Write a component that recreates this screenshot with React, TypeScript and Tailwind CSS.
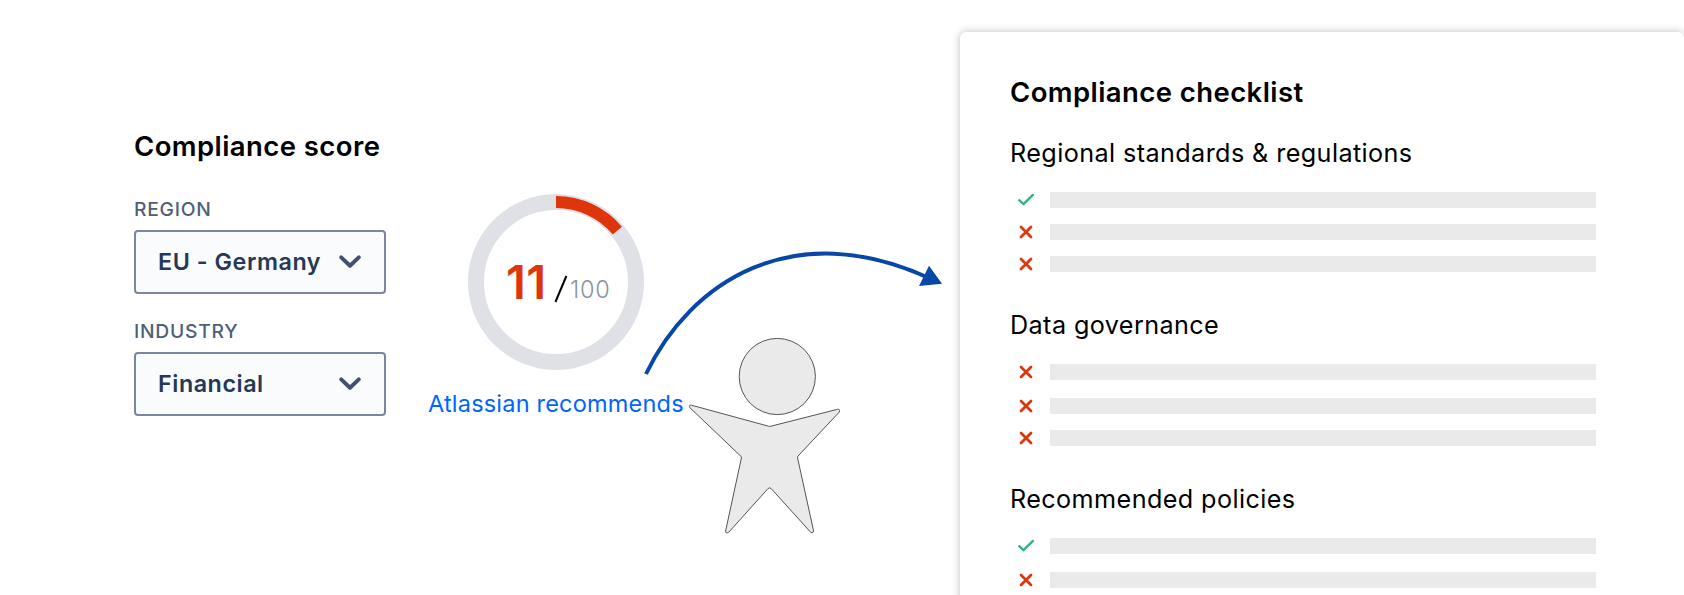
type Item = { ok: boolean; gap: string };
type Section = { title: string; spacing: string; items: Item[] };

const sections: Section[] = [
  {
    title: "Regional standards & regulations",
    spacing: "mt-[26px]",
    items: [
      { ok: true, gap: "mt-5" },
      { ok: false, gap: "mt-4" },
      { ok: false, gap: "mt-4" },
    ],
  },
  {
    title: "Data governance",
    spacing: "mt-[34px]",
    items: [
      { ok: false, gap: "mt-5" },
      { ok: false, gap: "mt-[18px]" },
      { ok: false, gap: "mt-4" },
    ],
  },
  {
    title: "Recommended policies",
    spacing: "mt-[34px]",
    items: [
      { ok: true, gap: "mt-5" },
      { ok: false, gap: "mt-[18px]" },
    ],
  },
];

function Status({ ok }: { ok: boolean }) {
  return (
    <svg
      className="h-4 w-8 shrink-0"
      viewBox="0 0 32 16"
      fill="none"
      strokeLinecap="round"
      strokeLinejoin="round"
    >
      {ok ? (
        <path d="M9.2 8.2L13.5 12.2L22.9 2.9" stroke="#36b37e" strokeWidth="2.4" />
      ) : (
        <path d="M11 3L21 13M21 3L11 13" stroke="#de350b" strokeWidth="2.8" />
      )}
    </svg>
  );
}

function Select({ label, value }: { label: string; value: string }) {
  return (
    <div>
      <div className="text-[19.3px] leading-6 font-medium tracking-[0.75px] text-[#505f79]">{label}</div>
      <button className="mt-[9px] flex h-16 w-[252px] items-center justify-between rounded-[4px] border-2 border-[#7a869a] bg-[#fafbfc] px-[22px]">
        <span className="text-[23.3px] leading-8 font-semibold tracking-[0.55px] whitespace-nowrap text-[#253858]">
          {value}
        </span>
        <svg
          className="h-4 w-6 shrink-0"
          viewBox="0 0 24 16"
          fill="none"
          stroke="#42526e"
          strokeWidth="4"
          strokeLinecap="round"
          strokeLinejoin="round"
        >
          <path d="M3.2 3.4L12 11.8L20.8 3.4" />
        </svg>
      </button>
    </div>
  );
}

export default function App() {
  return (
    <main className="relative flex h-[595px] w-[1684px] overflow-hidden bg-white font-['Inter',sans-serif] text-black">
      <section className="flex w-[960px] shrink-0">
        <div className="ml-[134px] w-[252px] pt-[130px]">
          <h2 className="text-[27.5px] leading-8 font-semibold tracking-[0.42px] whitespace-nowrap">Compliance score</h2>
          <div className="mt-[35px] flex flex-col gap-[25px]">
            <Select label="REGION" value="EU - Germany" />
            <Select label="INDUSTRY" value="Financial" />
          </div>
        </div>
        <div className="ml-[42px] flex w-[256px] flex-col items-center pt-[194px]">
          <div className="relative h-[176px] w-[176px]">
            <svg className="h-full w-full" viewBox="0 0 176 176" fill="none">
              <circle cx="88" cy="88" r="80" stroke="#dfe1e6" strokeWidth="16" />
              <path d="M88 8A80 80 0 0 1 149.3 36.6" stroke="#de350b" strokeWidth="12" />
            </svg>
            <div className="absolute inset-0 flex pt-[60px] pl-[38px]">
              <span className="w-[48px] text-[47px] leading-[56px] font-semibold tracking-[0.4px] text-[#de350b]">11</span>
              <svg className="mt-[21px] h-7 w-4 shrink-0" viewBox="0 0 16 28" stroke="#000" strokeWidth="2">
                <path d="M1.4 27L12.4 1" />
              </svg>
              <span className="mt-5 text-[23.5px] leading-8 font-light tracking-[0.8px] text-[#8993a4]">100</span>
            </div>
          </div>
          <a
            className="mt-[18px] w-full text-[23.5px] leading-8 tracking-[0.2px] whitespace-nowrap text-[#0065ff]"
            href="#"
          >
            Atlassian recommends
          </a>
        </div>
      </section>

      <aside className="mt-8 h-[640px] w-[724px] shrink-0 self-start rounded-[6px] bg-white pt-[44px] pl-[50px] shadow-[0_0_8px_rgba(0,0,0,0.25)]">
        <h2 className="text-[27.5px] leading-8 font-semibold tracking-[0.42px]">Compliance checklist</h2>
        {sections.map((section) => (
          <div key={section.title} className={section.spacing}>
            <h3 className="text-[25.2px] leading-[38px] tracking-[0.4px]">{section.title}</h3>
            {section.items.map((item, i) => (
              <div key={i} className={`flex items-center gap-2 ${item.gap}`}>
                <Status ok={item.ok} />
                <div className="h-4 w-[546px] bg-[#eaeaea]" />
              </div>
            ))}
          </div>
        ))}
      </aside>

      <svg
        className="pointer-events-none absolute top-[240px] left-[640px] h-[300px] w-[310px]"
        viewBox="640 240 310 300"
      >
        <path d="M646 374C690 282 793 215 930 278.5" fill="none" stroke="#0747a6" strokeWidth="4" />
        <path d="M942 283.7L929 265.7L919 286Z" fill="#0747a6" />
        <g fill="#eaeaea" stroke="#555" strokeWidth="1">
          <circle cx="777.3" cy="376.5" r="38.1" />
          <path
            strokeLinejoin="round"
            d="M691.5 405.2L768.5 426.2Q769.7 426.6 770.9 426.2L837.5 409.3Q840.4 409 839.3 412L797.9 456.2Q797.4 457 797.6 458L813.6 531Q812.8 534 810.8 532.4L771.2 488.6Q769.6 487 768 488.6L728.6 532.4Q725.4 534 725.6 531L741.4 458Q741.6 457 741 456.4L689.8 407.6Q688.6 405 691.5 405.2Z"
          />
        </g>
      </svg>
    </main>
  );
}
